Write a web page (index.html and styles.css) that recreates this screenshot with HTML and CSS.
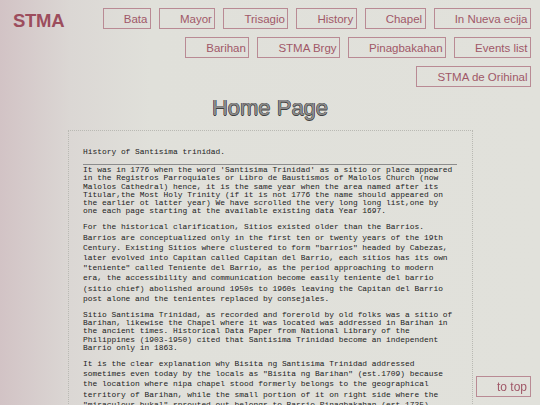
FILE: index.html
```html
<!DOCTYPE html>
<html lang="en">
<head>
<meta charset="utf-8">
<title>STMA - Home Page</title>
<link rel="stylesheet" href="styles.css">
</head>
<body>
<header class="site-header">
  <div class="logo">STMA</div>
  <nav class="nav">
    <div class="nav-row">
      <a class="nav-btn" href="#">Bata</a>
      <a class="nav-btn" href="#">Mayor</a>
      <a class="nav-btn" href="#">Trisagio</a>
      <a class="nav-btn" href="#">History</a>
      <a class="nav-btn" href="#">Chapel</a>
      <a class="nav-btn" href="#">In Nueva ecija</a>
    </div>
    <div class="nav-row">
      <a class="nav-btn" href="#">Barihan</a>
      <a class="nav-btn" href="#">STMA Brgy</a>
      <a class="nav-btn" href="#">Pinagbakahan</a>
      <a class="nav-btn" href="#">Events list</a>
    </div>
    <div class="nav-row">
      <a class="nav-btn" href="#">STMA de Orihinal</a>
    </div>
  </nav>
</header>

<h1 class="page-title">Home Page</h1>

<main class="content">
  <h2 class="content-heading">History of Santisima trinidad.</h2>
  <div class="rule"></div>
  <p class="para tight">It was in 1776 when the word 'Santisima Trinidad' as a sitio or place appeared in the Registros Parroquiales or Libro de Baustismos of Malolos Church (now Malolos Cathedral) hence, it is the same year when the area named after its Titular,the Most Holy Trinity (if it is not 1776 the name should appeared on the earlier ot latter year) We have scrolled the very long long list,one by one each page starting at the available existing data Year 1697.</p>
  <p class="para loose">For the historical clarification, Sitios existed older than the Barrios. Barrios are conceptualized only in the first ten or twenty years of the 19th Century. Existing Sitios where clustered to form "barrios" headed by Cabezas, later evolved into Capitan called Capitan del Barrio, each sitios has its own "teniente" called Teniente del Barrio, as the period approaching to modern era, the accessibility and communication become easily teniente del barrio (sitio chief) abolished around 1950s to 1960s leaving the Capitan del Barrio post alone and the tenientes replaced by consejales.</p>
  <p class="para tight">Sitio Santisima Trinidad, as recorded and forerold by old folks was a sitio of Barihan, likewise the Chapel where it was located was addressed in Barihan in the ancient times. Historical Data Paper from National Library of the Philippines (1903-1950) cited that Santisima Trinidad become an independent Barrio only in 1863.</p>
  <p class="para loose">It is the clear explanation why Bisita ng Santisima Trinidad addressed sometimes even today by the locals as "Bisita ng Barihan" (est.1709) because the location where nipa chapel stood formerly belongs to the geographical territory of Barihan, while the small portion of it on right side where the "miraculous bukal" sprouted-out belongs to Barrio Pinagbakahan (est.1735)</p>
</main>

<a class="to-top" href="#">to top</a>
</body>
</html>
```

FILE: styles.css
```css
html, body {
  margin: 0;
  padding: 0;
}

body {
  min-height: 405px;
  background: linear-gradient(to right, #d2c3c5 0px, #dbd7d4 70px, #e0e0da 150px, #e1e1db 100%);
  font-family: "Liberation Sans", Arial, sans-serif;
  overflow: hidden;
}

.site-header {
  display: flex;
  align-items: flex-start;
  padding: 8px 9px 0 13px;
}

.logo {
  font-family: "Liberation Sans", Arial, sans-serif;
  font-weight: bold;
  font-size: 18.5px;
  line-height: 21px;
  padding-top: 2px;
  color: #9c4d5d;
  letter-spacing: -0.3px;
}

.nav {
  flex: 1;
  display: flex;
  flex-direction: column;
  align-items: flex-end;
  gap: 8px;
}

.nav-row {
  display: flex;
  gap: 8px;
}

.nav-btn {
  display: flex;
  align-items: flex-end;
  justify-content: flex-end;
  box-sizing: border-box;
  height: 21px;
  padding: 0 2.5px 2px 20px;
  border: 1px solid #b98a94;
  color: #a05868;
  font-size: 11.5px;
  line-height: 13px;
  text-decoration: none;
}

.page-title {
  margin: 8px 0 0;
  text-align: center;
  font-family: "Liberation Sans", Arial, sans-serif;
  font-weight: normal;
  font-size: 22px;
  line-height: 26px;
  color: #8c8c8c;
  text-shadow: -0.5px 0 0 #404040, 0.5px 0 0 #404040, 0 -0.5px 0 #404040, 0 0.5px 0 #404040;
}

.content {
  width: 374px;
  margin: 9px 0 0 68px;
  padding: 16px 15px 40px 14px;
  border: 1px dotted #b9b9b3;
  font-family: "Liberation Mono", "Courier New", monospace;
  font-size: 7.9px;
  color: #1c1c1c;
}

.content-heading {
  margin: 0;
  font-size: 7.9px;
  font-weight: normal;
  line-height: 10.2px;
}

.rule {
  margin: 7px 0 1px;
  border-top: 1px solid #8c8c8c;
}

.para {
  margin: 0 0 7px;
  width: 78.5ch;
}

.tight {
  line-height: 8.2px;
}

.loose {
  line-height: 10.2px;
}

.to-top {
  position: fixed;
  right: 9px;
  bottom: 8px;
  display: flex;
  align-items: flex-end;
  justify-content: flex-end;
  box-sizing: border-box;
  width: 55px;
  height: 21px;
  padding: 0 3px 2px 0;
  border: 1px solid #b98a94;
  color: #a05868;
  font-size: 12px;
  line-height: 14px;
  text-decoration: none;
  background: transparent;
}
```
